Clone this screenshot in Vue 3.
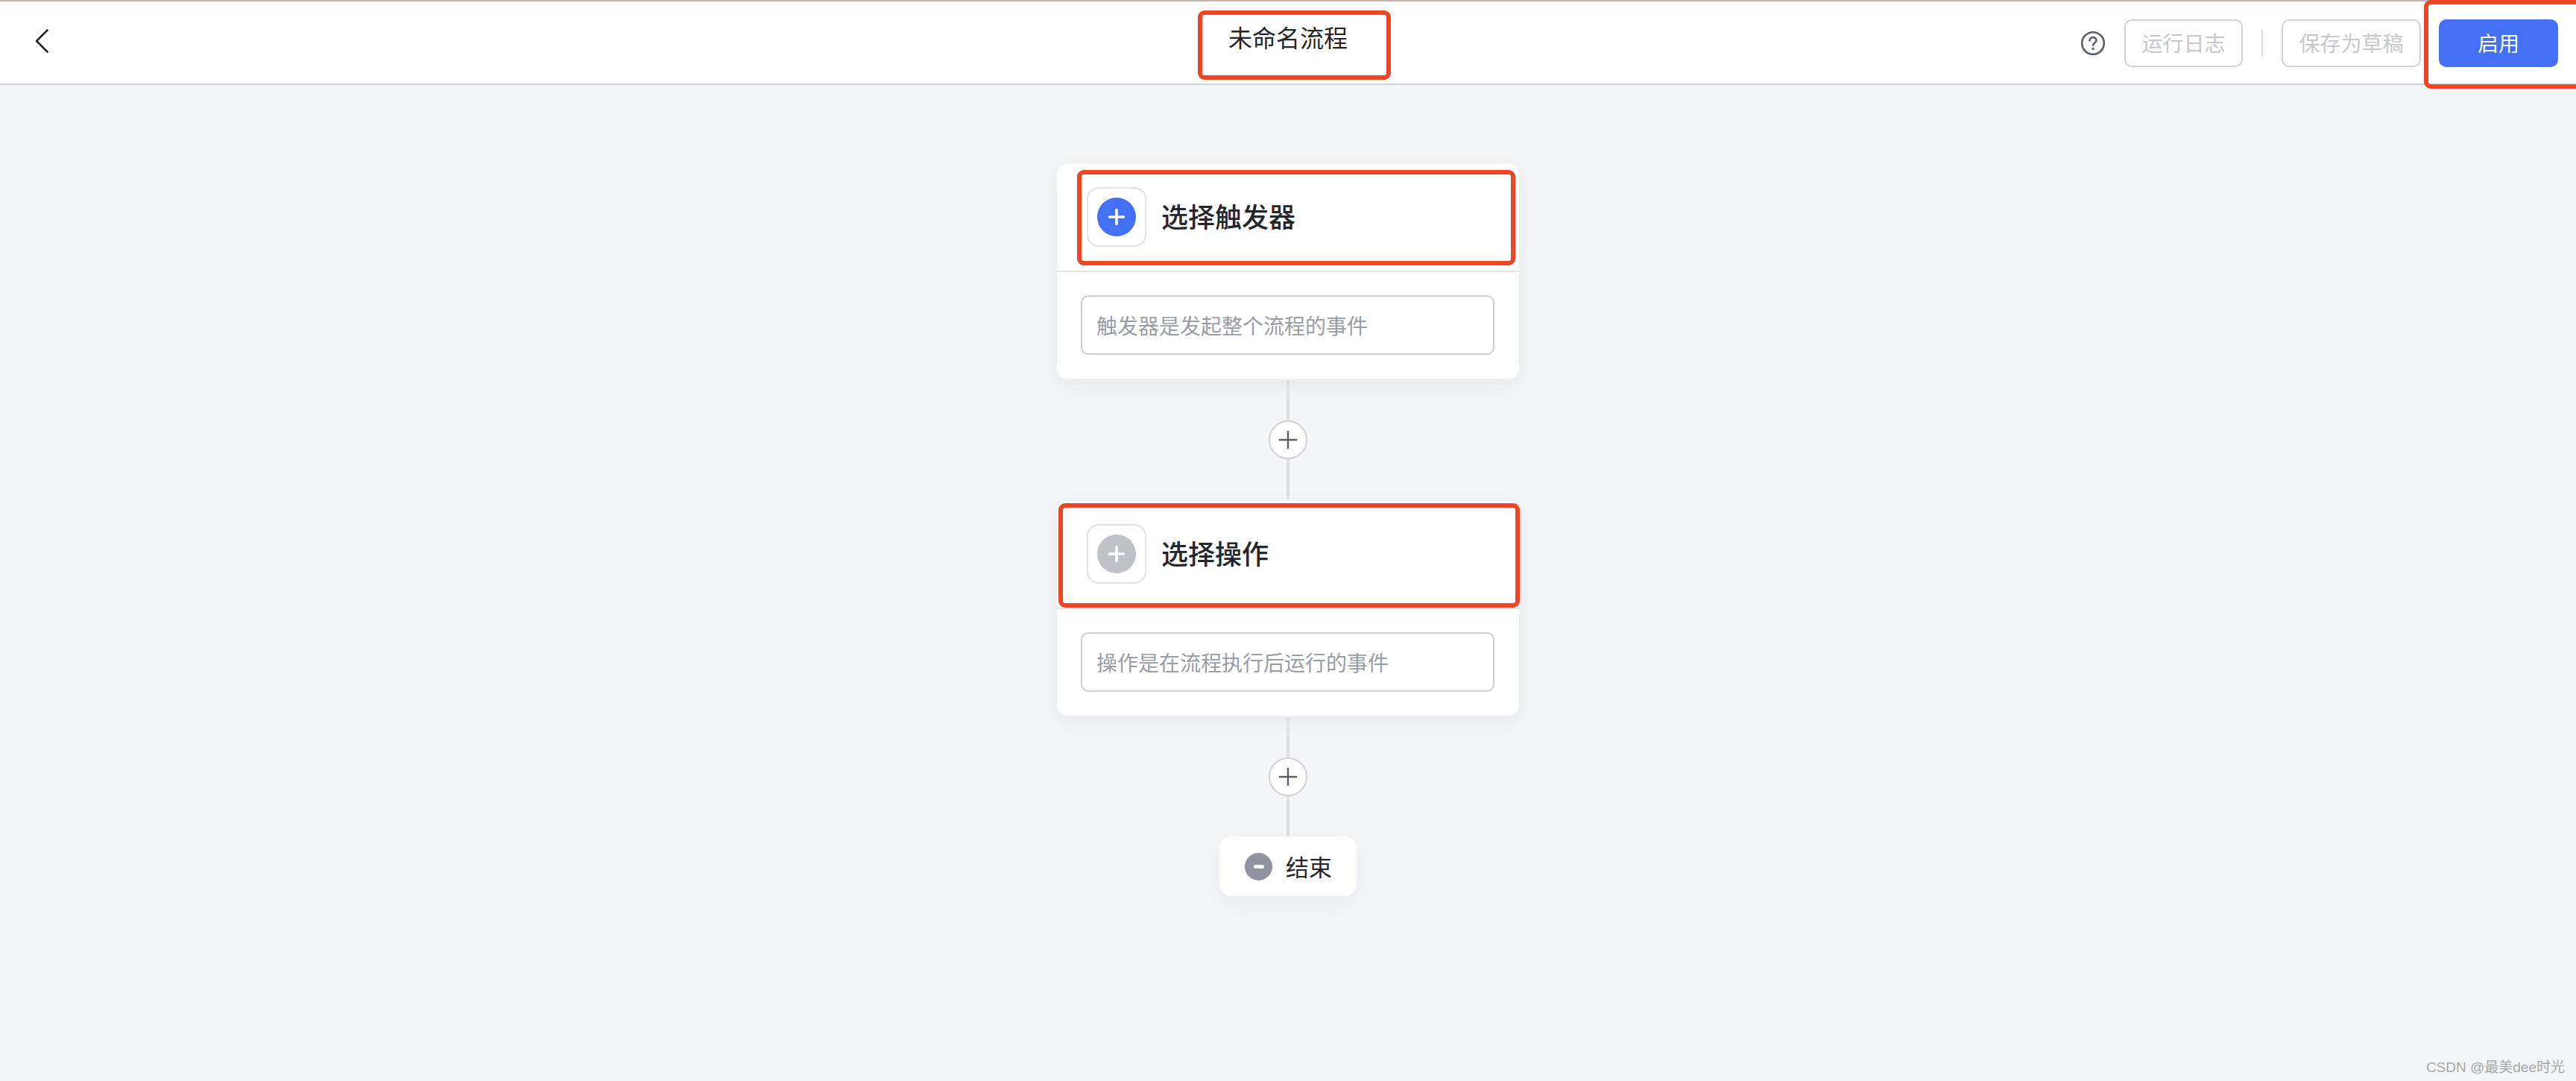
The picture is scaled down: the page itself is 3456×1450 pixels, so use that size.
<template>
  <div class="page">
    <header class="topbar">
      <div class="topbar-left">
        <button class="back-btn" type="button" aria-label="返回">
          <svg width="20" height="34" viewBox="0 0 20 34" fill="none">
            <path d="M17.5 2.5 3 17l14.5 14.5" stroke="#23262b" stroke-width="2.6" stroke-linecap="round" stroke-linejoin="round" />
          </svg>
        </button>
      </div>
      <h1 class="flow-name">未命名流程</h1>
      <div class="topbar-right">
        <svg class="help" width="34" height="34" viewBox="0 0 34 34" fill="none">
          <circle cx="17" cy="17" r="14.8" stroke="#5b5f68" stroke-width="2.6" />
          <path d="M12.6 13.4c0-2.6 2-4.3 4.5-4.3s4.4 1.6 4.4 3.9c0 3.4-4.4 3.5-4.4 6.8" stroke="#5b5f68" stroke-width="2.6" stroke-linecap="round" />
          <circle cx="17.1" cy="24.4" r="1.7" fill="#5b5f68" />
        </svg>
        <button class="btn btn-log" type="button">运行日志</button>
        <span class="sep"></span>
        <button class="btn btn-draft" type="button">保存为草稿</button>
        <button class="btn btn-primary" type="button">启用</button>
      </div>
    </header>

    <main class="canvas">
      <template v-for="step in steps" :key="step.title">
        <section class="card">
          <div class="card-head">
            <div class="icon-box">
              <span :class="['round-plus', step.tone]">
                <svg width="24" height="24" viewBox="0 0 24 24" fill="none">
                  <path d="M12 2.5v19M2.5 12h19" stroke="#fff" stroke-width="3.6" stroke-linecap="round" />
                </svg>
              </span>
            </div>
            <h2 class="card-title">{{ step.title }}</h2>
          </div>
          <div class="card-body">
            <div class="hint-box">{{ step.hint }}</div>
          </div>
        </section>
        <div class="connector">
          <span class="line"></span>
          <button class="add-btn" type="button" aria-label="添加">
            <svg width="24" height="24" viewBox="0 0 24 24" fill="none">
              <path d="M12 1v22M1 12h22" stroke="#5b5f68" stroke-width="2.4" stroke-linecap="round" />
            </svg>
          </button>
          <span class="line"></span>
        </div>
      </template>
      <div class="end-node">
        <span class="end-dot"><i></i></span>
        <span class="end-text">结束</span>
      </div>
    </main>

    <!-- red annotation boxes drawn on top of the screenshot -->
    <span class="mark mark-title"></span>
    <span class="mark mark-enable"></span>
    <span class="mark mark-trigger"></span>
    <span class="mark mark-action"></span>

    <span class="watermark">CSDN @最美dee时光</span>
  </div>
</template>

<script setup>
const steps = [
  { title: '选择触发器', hint: '触发器是发起整个流程的事件', tone: 'blue' },
  { title: '选择操作', hint: '操作是在流程执行后运行的事件', tone: 'gray' }
]
</script>

<style>
html,
body {
  margin: 0;
  background: #f4f5f7;
}
</style>

<style scoped>
.page {
  position: relative;
  width: 3456px;
  height: 1450px;
  overflow: hidden;
  background: #f4f5f7;
  color: #23262b;
  font-family: "Noto Sans CJK SC", "Noto Sans", sans-serif;
}

.topbar {
  box-sizing: border-box;
  height: 114px;
  display: grid;
  grid-template-columns: 1fr auto 1fr;
  background: #fff;
  border-top: 2px solid #c4b4b1;
  border-bottom: 2px solid #d1d2d6;
}

.topbar-left {
  display: flex;
  align-items: center;
  padding: 0 0 4px 46px;
}

.back-btn {
  display: flex;
  padding: 0;
  background: none;
  border: none;
}

.flow-name {
  margin: 0;
  padding-top: 25px;
  font-size: 32px;
  font-weight: 400;
  line-height: 44px;
}

.topbar-right {
  display: flex;
  align-items: center;
  justify-content: flex-end;
  padding: 2px 24px 0 0;
}

.help {
  margin-right: 25px;
}

.btn {
  box-sizing: border-box;
  height: 64px;
  padding: 0 0 2px;
  font: inherit;
  font-size: 28px;
  line-height: 40px;
  background: #fff;
  color: #c6c8cc;
  border: 2px solid #d1d2d6;
  border-radius: 10px;
}

.btn-log {
  width: 159px;
}

.btn-draft {
  width: 187px;
}

.btn-primary {
  width: 160px;
  margin-left: 24px;
  background: #4370f5;
  border-color: #4370f5;
  color: #fff;
}

.sep {
  width: 2px;
  height: 36px;
  margin: 0 25px;
  background: #dcdde0;
}

.canvas {
  display: flex;
  flex-direction: column;
  align-items: center;
  padding-top: 106px;
}

.card {
  box-sizing: border-box;
  width: 620px;
  height: 288px;
  background: #fff;
  border-radius: 14px;
  box-shadow: 0 8px 28px rgba(30, 35, 50, 0.06);
}

.card-head {
  box-sizing: border-box;
  height: 145px;
  display: flex;
  align-items: flex-start;
  gap: 20px;
  padding: 31px 0 0 40px;
  border-bottom: 2px solid #e4e5e8;
}

.icon-box {
  box-sizing: border-box;
  width: 80px;
  height: 80px;
  display: flex;
  align-items: center;
  justify-content: center;
  border: 2px solid #e2e3e6;
  border-radius: 16px;
}

.round-plus {
  width: 52px;
  height: 52px;
  display: flex;
  align-items: center;
  justify-content: center;
  border-radius: 50%;
}

.round-plus.blue {
  background: #4370f5;
}

.round-plus.gray {
  background: #bfc1c6;
}

.card-title {
  margin: 0;
  font-size: 36px;
  font-weight: 500;
  line-height: 77px;
}

.card-body {
  padding: 31px 32px 0;
}

.hint-box {
  box-sizing: border-box;
  width: 555px;
  height: 80px;
  padding-left: 19px;
  font-size: 28px;
  line-height: 76px;
  color: #999da5;
  border: 2px solid #cdced2;
  border-radius: 10px;
}

.connector {
  display: flex;
  flex-direction: column;
  align-items: center;
  padding: 2px 0;
}

.line {
  width: 4px;
  height: 54px;
  background: #dfe0e4;
}

.add-btn {
  box-sizing: border-box;
  width: 52px;
  height: 52px;
  display: flex;
  align-items: center;
  justify-content: center;
  padding: 0;
  background: #fff;
  border: 2px solid #d1d2d6;
  border-radius: 50%;
}

.end-node {
  box-sizing: border-box;
  width: 184px;
  height: 80px;
  margin-top: -2px;
  display: flex;
  align-items: center;
  gap: 18px;
  padding-left: 34px;
  background: #fff;
  border-radius: 16px;
  box-shadow: 0 8px 28px rgba(30, 35, 50, 0.05);
}

.end-dot {
  width: 37px;
  height: 37px;
  display: flex;
  align-items: center;
  justify-content: center;
  border-radius: 50%;
  background: #91949e;
}

.end-dot i {
  width: 14px;
  height: 5px;
  border-radius: 3px;
  background: #fff;
}

.end-text {
  font-size: 31px;
  line-height: 44px;
}

.mark {
  position: absolute;
  box-sizing: border-box;
  border: 6px solid #ee4526;
  border-radius: 9px;
}

.mark-title {
  left: 1607px;
  top: 14px;
  width: 259px;
  height: 93px;
}

.mark-enable {
  left: 3252px;
  top: 0;
  width: 214px;
  height: 119px;
}

.mark-trigger {
  left: 1445px;
  top: 228px;
  width: 588px;
  height: 128px;
}

.mark-action {
  left: 1420px;
  top: 675px;
  width: 619px;
  height: 140px;
}

.watermark {
  position: absolute;
  right: 15px;
  top: 1418px;
  font-family: "Liberation Sans", "Noto Sans CJK SC", sans-serif;
  font-size: 19px;
  line-height: 28px;
  color: #a6a8ab;
}
</style>
